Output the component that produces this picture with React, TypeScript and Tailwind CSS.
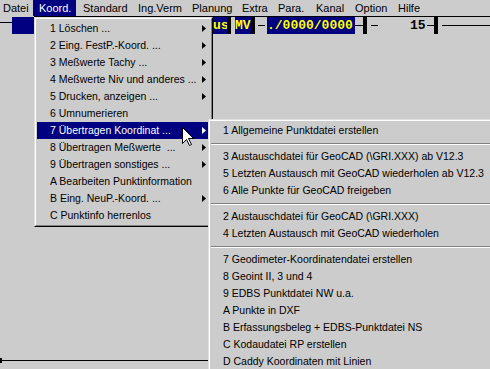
import React from "react";

const bar = [
  { label: "Datei", w: "w-[33px] pl-[3px]" },
  { label: "Koord.", w: "w-[43px] pl-[6px]", active: true },
  { label: "Standard", w: "w-[56px] pl-[7px]" },
  { label: "Ing.Verm", w: "w-[54px] pl-[6px]" },
  { label: "Planung", w: "w-[50px] pl-[6px]" },
  { label: "Extra", w: "w-[36px] pl-[6px]" },
  { label: "Para.", w: "w-[37px] pl-[6px]" },
  { label: "Kanal", w: "w-[40px] pl-[7px]" },
  { label: "Option", w: "w-[43px] pl-[6px]" },
  { label: "Hilfe", w: "w-[50px] pl-[6px]" },
];

const koord = [
  { t: "1 Löschen ...", sub: true },
  { t: "2 Eing. FestP.-Koord. ...", sub: true },
  { t: "3 Meßwerte Tachy ...", sub: true },
  { t: "4 Meßwerte Niv und anderes ...", sub: true },
  { t: "5 Drucken, anzeigen ...", sub: true },
  { t: "6 Umnumerieren" },
  { t: "7 Übertragen Koordinat ...", sub: true, hi: true },
  { t: "8 Übertragen Meßwerte  ...", sub: true },
  { t: "9 Übertragen sonstiges ...", sub: true },
  { t: "A Bearbeiten Punktinformation" },
  { t: "B Eing. NeuP.-Koord. ...", sub: true },
  { t: "C Punktinfo herrenlos" },
];

const export_ = [
  "1 Allgemeine Punktdatei erstellen",
  "-",
  "3 Austauschdatei für GeoCAD (\\GRI.XXX) ab V12.3",
  "5 Letzten Austausch mit GeoCAD wiederholen ab V12.3",
  "6 Alle Punkte für GeoCAD freigeben",
  "-",
  "2 Austauschdatei für GeoCAD (\\GRI.XXX)",
  "4 Letzten Austausch mit GeoCAD wiederholen",
  "-",
  "7 Geodimeter-Koordinatendatei erstellen",
  "8 Geoint II, 3 und 4",
  "9 EDBS Punktdatei NW u.a.",
  "A Punkte in DXF",
  "B Erfassungsbeleg + EDBS-Punktdatei NS",
  "C Kodaudatei RP erstellen",
  "D Caddy Koordinaten mit Linien",
];

function Tri({ white }: { white?: boolean }) {
  return (
    <svg width="4" height="7" viewBox="0 0 4 7" className="shrink-0">
      <polygon points="0,0 4,3.5 0,7" fill={white ? "#ffffff" : "#000000"} />
    </svg>
  );
}

function Panel({ className, children }: any) {
  return (
    <div className={`absolute border border-[#dfdfdf] border-r-black border-b-black ${className}`}>
      <div className="h-full border border-white border-r-[#808080] border-b-[#808080] bg-[#cccccc] p-px text-[10.5px]">
        {children}
      </div>
    </div>
  );
}

function Box({ children, w }: any) {
  return (
    <div
      className={`${w} h-full bg-[#000080] text-[#ffff00] font-['Liberation_Mono',monospace] font-bold text-[13px] leading-[17px] overflow-hidden whitespace-nowrap`}
    >
      {children}
    </div>
  );
}

export default function App() {
  return (
    <div className="relative w-[490px] h-[369px] overflow-hidden bg-[#cccccc] text-black text-[11px] font-['Liberation_Sans',Arial,sans-serif] flex flex-col">
      {/* menu bar */}
      <div className="h-[16px] flex shrink-0">
        {bar.map((b) => (
          <div
            key={b.label}
            className={`${b.w} h-full leading-[16px] shrink-0 ${b.active ? "bg-[#000080] text-white" : ""}`}
          >
            {b.label}
          </div>
        ))}
      </div>
      <div className="h-px ml-[34px] bg-black shrink-0" />

      {/* field row */}
      <div className="h-[17px] flex items-center shrink-0">
        <div className="w-[12px] h-px bg-black self-start mt-[5px]" />
        <div className="w-[22px] h-full bg-[#000080]" />
        <div className="w-[179px]" />
        <Box w="w-[14px]">
          <span className="block">us</span>
        </Box>
        <div className="w-[4px] h-full bg-black" />
        <div className="w-[4px]" />
        <Box w="w-[16px]">MV</Box>
        <div className="w-[4px] h-full bg-black" />
        <div className="w-[3px]" />
        <div className="w-[7px] h-px bg-black" />
        <div className="w-[2px]" />
        <Box w="w-[88px]">./0000/0000</Box>
        <div className="w-[8px] h-px bg-black" />
        <div className="w-[4px] h-full bg-black" />
        <div className="w-[4px]" />
        <div className="w-[7px] h-px bg-black" />
        <div className="w-[32px]" />
        <div className="w-[17px] font-['Liberation_Mono',monospace] font-bold text-[13px] leading-[17px]">15</div>
        <div className="w-[7px] h-px bg-black" />
        <div className="w-[4px] h-full bg-black" />
        <div className="w-[4px]" />
        <div className="flex-1 h-px bg-black" />
      </div>

      <div className="flex-1" />

      {/* bottom line */}
      <div className="h-[5px] flex items-center shrink-0 mb-[6px]">
        <div className="w-[2px] h-[5px] bg-black" />
        <div className="flex-1 h-px bg-black" />
      </div>

      {/* Koord. dropdown */}
      <Panel className="left-[34px] top-[17px] w-[179px] h-[210px]">
        {koord.map((k) => (
          <div
            key={k.t}
            className={`h-[17px] flex items-center justify-between pl-[13px] pr-[4px] whitespace-pre ${k.hi ? "bg-[#000080] text-white" : ""}`}
          >
            <span>{k.t}</span>
            {k.sub && <Tri white={k.hi} />}
          </div>
        ))}
      </Panel>

      {/* Übertragen submenu */}
      <Panel className="left-[208px] top-[119px] w-[300px] h-[270px]">
        {export_.map((t, i) =>
          t === "-" ? (
            <div key={i} className="h-[9px] flex items-center">
              <div className="w-full border-t border-[#808080] border-b border-b-white" />
            </div>
          ) : (
            <div key={i} className="h-[17px] leading-[17px] pl-[12px] whitespace-pre">
              {t}
            </div>
          )
        )}
      </Panel>

      {/* mouse pointer */}
      <svg width="13" height="20" viewBox="0 0 13 20" className="absolute left-[182px] top-[127px]">
        <path
          d="M0.5 0.5 L0.5 16.5 L4.5 12.5 L7.5 18.5 L9.5 17.5 L6.5 11.5 L11.5 11.5 Z"
          fill="#ffffff"
          stroke="#000000"
          strokeWidth="1"
        />
      </svg>
    </div>
  );
}
